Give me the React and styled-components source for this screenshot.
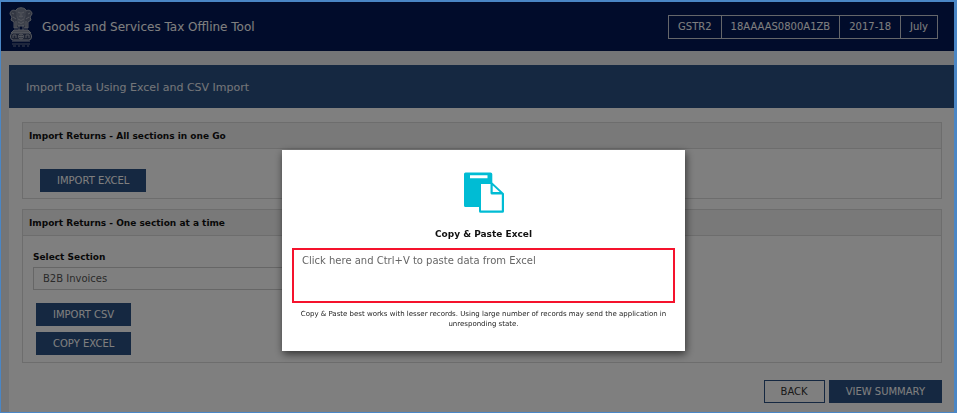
import React, { useState } from 'react'
import styled, { createGlobalStyle } from 'styled-components'

const GlobalStyle = createGlobalStyle`
  * { box-sizing: border-box; }
  body {
    margin: 0;
    background: #e9ebef;
    color: #111;
    font-family: "DejaVu Sans", Verdana, sans-serif;
    font-size: 10px;
    line-height: 16px;
  }
  button, select, textarea { font-family: inherit; }
`;

const Frame = styled.div`
  min-height: 100vh;
  display: flex;
  flex-direction: column;
  border: solid #4a86c5;
  border-width: 2px 3px 1px 1px;
`;

const Header = styled.header`
  display: flex;
  align-items: center;
  gap: 8px;
  height: 49px;
  padding: 0 16px 0 7px;
  background: #031956;
  color: #fff;
`;

const Brand = styled.h1`
  margin: 0;
  flex: 1;
  font-size: 12px;
  font-weight: 400;
`;

const InfoList = styled.ul`
  display: flex;
  margin: 0;
  padding: 0;
  list-style: none;
  border: 1px solid #c8ccd4;
`;

const InfoItem = styled.li`
  padding: 3px 9px;
  line-height: 16px;
  & + & { border-left: 1px solid #c8ccd4; }
`;

const Content = styled.main`
  flex: 1;
  margin: 14px 0 0 8px;
  background: #fff;
`;

const PageTitle = styled.h2`
  margin: 0;
  padding: 15px 17px 12px;
  background: #2b5082;
  color: #e8ecf2;
  font-size: 11px;
  font-weight: 400;
`;

const Sections = styled.div`
  display: flex;
  flex-direction: column;
  gap: 10px;
  padding: 14px 12px 0 13px;
`;

const Panel = styled.section`
  border: 1px solid #dadada;
`;

const PanelTitle = styled.h3`
  margin: 0;
  padding: 5px 6px 4px;
  background: #f3f3f3;
  border-bottom: 1px solid #dadada;
  font-size: 9px;
  font-weight: 700;
`;

const PanelBody = styled.div`
  display: flex;
  flex-direction: column;
  align-items: flex-start;
  gap: 6px;
  padding: ${props => props.$pad};
`;

const Field = styled.div`
  display: flex;
  flex-direction: column;
  width: 33%;
  margin-bottom: 7px;
`;

const Label = styled.label`
  margin-bottom: 2px;
  font-size: 9px;
  font-weight: 700;
`;

const Select = styled.select`
  appearance: none;
  height: 23px;
  padding: 0 9px;
  border: 1px solid #ccc;
  border-radius: 0;
  background: #fff;
  color: #555;
  font-size: 10px;
`;

const Button = styled.button`
  height: 23px;
  padding: 0 16px;
  margin-left: ${props => props.$indent || '0'};
  border: 1px solid #2b5082;
  background: ${props => (props.$outline ? '#fff' : '#2b5082')};
  color: ${props => (props.$outline ? '#333' : '#fff')};
  font-size: 10px;
`;

const Actions = styled.div`
  display: flex;
  justify-content: flex-end;
  gap: 4px;
  padding: 17px 12px 8px;
`;

const Backdrop = styled.div`
  position: fixed;
  inset: 2px 3px 1px 1px;
  display: flex;
  align-items: flex-start;
  justify-content: center;
  padding: 148px 0 0 12px;
  background: rgba(0, 0, 0, 0.5);
`;

const Modal = styled.div`
  display: flex;
  flex-direction: column;
  align-items: center;
  width: 403px;
  max-width: 90%;
  padding: 22px 10px 22px;
  background: #fff;
  box-shadow: 1px 3px 8px rgba(0, 0, 0, 0.6);
`;

const ModalTitle = styled.h2`
  margin: 12px 0 6px;
  font-size: 9px;
  font-weight: 700;
`;

const PasteBox = styled.textarea`
  display: block;
  width: 100%;
  height: 55px;
  padding: 3px 8px;
  border: 2px solid #f5132d;
  resize: none;
  font-size: 10px;
  line-height: 16px;
  outline: none;
  &::placeholder { color: #666; opacity: 1; }
`;

const Note = styled.p`
  margin: 6px 0 0;
  color: #222;
  font-size: 7px;
  line-height: 10px;
  text-align: center;
`;

const Emblem = () => (
  <svg width="26" height="40" viewBox="0 0 26 40" fill="none" stroke="#a9aebb" strokeWidth="1" aria-hidden="true">
    <path d="M8 3c2-3 8-3 10 0l1 4-2 3 1 4-2 5H10l-2-5 1-4-2-3z" fill="#7d8598" />
    <path d="M8 4C5 2 2 4 2 7l2 3-1 3 3 2v6h4M18 4c3-2 6 0 6 3l-2 3 1 3-3 2v6h-4" fill="#687187" />
    <path d="M10 5l2 1M16 5l-2 1M13 5v4M11 9q2 2 4 0M10 12q3 3 6 0M10 15q3 3 6 0M11 18v5M15 18v5M4 6l2 1M22 6l-2 1M5 10l3 2M21 10l-3 2M8 14v7M18 14v7" />
    <path d="M6 23h14l3 3H3z" fill="#868d9f" />
    <rect x="2.500" y="26" width="21" height="7" rx="3" fill="#3c4868" />
    <circle cx="13" cy="29.500" r="2.500" />
    <path d="M13 27v5M10.500 29.500h5M5 31v-3h3v3M18 31v-3h3v3" />
    <path d="M4 34h18" />
    <path d="M4 37h18M5 39h3M10 39h2M14 39h3M19 39h2" strokeWidth=".7" />
  </svg>
);

const PasteIcon = () => (
  <svg width="42" height="42" viewBox="0 0 42 42" aria-hidden="true">
    <path d="M2.500 .5h25q1.800 0 1.800 1.800v8.200L41 21.500v17.700q0 1.600-1.600 1.600H17.600q-1.600 0-1.600-1.600V35H2.500Q1 35 1 33.500V2Q1 .5 2.500 .5z" fill="#00bcd4" />
    <path d="M7 3.300h17.500v3H7zM18 12h9.500v9q0 1.500 1.500 1.500h9.800v16H18zM29.700 13.500V20h7z" fill="#fff" />
  </svg>
);

export default function App() {
  const [section, setSection] = useState('b2b');
  const [data, setData] = useState('');

  return (
    <>
      <GlobalStyle />
      <Frame>
        <Header>
          <Emblem />
          <Brand>Goods and Services Tax Offline Tool</Brand>
          <InfoList>
            <InfoItem>GSTR2</InfoItem>
            <InfoItem>18AAAAS0800A1ZB</InfoItem>
            <InfoItem>2017-18</InfoItem>
            <InfoItem>July</InfoItem>
          </InfoList>
        </Header>
        <Content>
          <PageTitle>Import Data Using Excel and CSV Import</PageTitle>
          <Sections>
            <Panel>
              <PanelTitle>Import Returns - All sections in one Go</PanelTitle>
              <PanelBody $pad="20px 17px 6px">
                <Button type="button">IMPORT EXCEL</Button>
              </PanelBody>
            </Panel>
            <Panel>
              <PanelTitle>Import Returns - One section at a time</PanelTitle>
              <PanelBody $pad="13px 10px 7px">
                <Field>
                  <Label htmlFor="section">Select Section</Label>
                  <Select id="section" value={section} onChange={e => setSection(e.target.value)}>
                    <option value="b2b">B2B Invoices</option>
                  </Select>
                </Field>
                <Button type="button" $indent="3px">IMPORT CSV</Button>
                <Button type="button" $indent="3px">COPY EXCEL</Button>
              </PanelBody>
            </Panel>
          </Sections>
          <Actions>
            <Button type="button" $outline>BACK</Button>
            <Button type="button">VIEW SUMMARY</Button>
          </Actions>
        </Content>
      </Frame>
      <Backdrop>
        <Modal role="dialog" aria-modal="true" aria-labelledby="paste-title">
          <PasteIcon />
          <ModalTitle id="paste-title">Copy &amp; Paste Excel</ModalTitle>
          <PasteBox
            aria-labelledby="paste-title"
            placeholder="Click here and Ctrl+V to paste data from Excel"
            value={data}
            onChange={e => setData(e.target.value)}
          />
          <Note>
            Copy &amp; Paste best works with lesser records. Using large number of records may send the application in unresponding state.
          </Note>
        </Modal>
      </Backdrop>
    </>
  );
}
